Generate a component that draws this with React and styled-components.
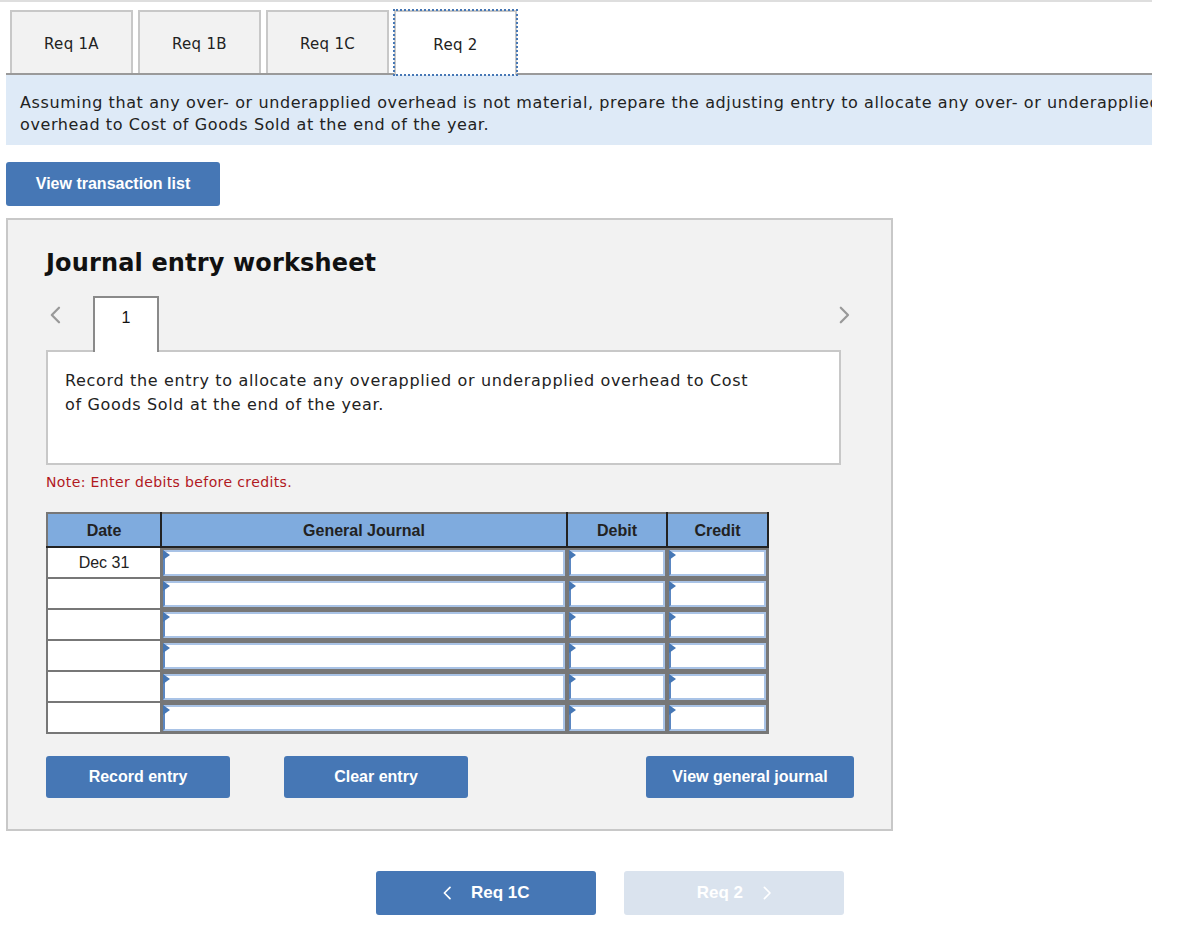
import React from 'react';
import styled, { createGlobalStyle } from 'styled-components';

const GlobalStyle = createGlobalStyle`
  body {
    margin: 0;
    background: #fff;
    font-family: 'DejaVu Sans', Verdana, sans-serif;
    color: #222;
  }
`;

const tabs = ['Req 1A', 'Req 1B', 'Req 1C', 'Req 2'];
const rows = ['Dec 31', '', '', '', '', ''];

const Chevron = ({ dir = 'left', color = '#999', size = 18, width = 2.5 }) => (
  <svg width={size * 0.6} height={size} viewBox='0 0 12 20' fill='none'>
    <path
      d={dir === 'left' ? 'M10 2 L2 10 L10 18' : 'M2 2 L10 10 L2 18'}
      stroke={color}
      strokeWidth={width}
      strokeLinecap='round'
      strokeLinejoin='round'
    />
  </svg>
);

const App = () => (
  <Page>
    <GlobalStyle />
    <TopRule />
    <TabBar>
      {tabs.map((t, i) => (
        <Tab key={t} active={i === tabs.length - 1}>
          {t}
        </Tab>
      ))}
    </TabBar>
    <Instruction>
      <span>
        Assuming that any over- or underapplied overhead is not material, prepare the adjusting entry to allocate any
        over- or underapplied
      </span>
      <span>overhead to Cost of Goods Sold at the end of the year.</span>
    </Instruction>
    <Toolbar>
      <BlueButton width={214} height={44}>
        View transaction list
      </BlueButton>
    </Toolbar>

    <Panel>
      <Heading>Journal entry worksheet</Heading>
      <EntryNav>
        <NavArrow>
          <Chevron dir='left' />
        </NavArrow>
        <EntryTab>1</EntryTab>
        <NavArrow right>
          <Chevron dir='right' />
        </NavArrow>
      </EntryNav>
      <Description>
        Record the entry to allocate any overapplied or underapplied overhead to Cost
        <br />
        of Goods Sold at the end of the year.
      </Description>
      <Note>Note: Enter debits before credits.</Note>

      <Journal>
        <colgroup>
          <col style={{ width: 114 }} />
          <col style={{ width: 406 }} />
          <col style={{ width: 100 }} />
          <col style={{ width: 101 }} />
        </colgroup>
        <thead>
          <tr>
            <Th>Date</Th>
            <Th>General Journal</Th>
            <Th>Debit</Th>
            <Th>Credit</Th>
          </tr>
        </thead>
        <tbody>
          {rows.map((d, i) => (
            <tr key={i}>
              <DateCell>{d}</DateCell>
              <InputCell>
                <Field />
              </InputCell>
              <InputCell>
                <Field />
              </InputCell>
              <InputCell>
                <Field />
              </InputCell>
            </tr>
          ))}
        </tbody>
      </Journal>

      <Actions>
        <BlueButton width={184} height={42}>
          Record entry
        </BlueButton>
        <BlueButton width={184} height={42}>
          Clear entry
        </BlueButton>
        <BlueButton width={208} height={42} push>
          View general journal
        </BlueButton>
      </Actions>
    </Panel>

    <Pager>
      <PageButton>
        <Chevron dir='left' color='#fff' size={14} width={2.4} />
        <span>Req 1C</span>
      </PageButton>
      <PageButton disabled>
        <span>Req 2</span>
        <Chevron dir='right' color='#fff' size={14} width={2.4} />
      </PageButton>
    </Pager>
  </Page>
);

export default App;

const Page = styled.div`
  width: 1152px;
  overflow: hidden;
  padding-bottom: 18px;
`;

const TopRule = styled.div`
  height: 2px;
  background: #dedede;
`;

const TabBar = styled.div`
  display: flex;
  gap: 5px;
  margin: 8px 0 0 6px;
  padding-left: 4px;
  border-bottom: 2px solid #9a9a9a;
`;

const Tab = styled.div`
  width: 123px;
  box-sizing: border-box;
  display: flex;
  align-items: center;
  justify-content: center;
  padding-top: 3px;
  font-size: 15px;
  letter-spacing: 0.3px;
  color: #222;
  background: ${(p) => (p.active ? '#fff' : '#f2f2f2')};
  border: 2px solid #c8c8c8;
  border-bottom: none;
  margin-bottom: ${(p) => (p.active ? '-2px' : '0')};
  height: ${(p) => (p.active ? '65px' : '63px')};
  outline: ${(p) => (p.active ? '2px dotted #4677b5' : 'none')};
  outline-offset: -1px;
`;

const Instruction = styled.div`
  margin-left: 6px;
  background: #deeaf7;
  padding: 17px 0 9px 14px;
  font-size: 16px;
  line-height: 22px;
  letter-spacing: 0.6px;
  color: #222;
  white-space: nowrap;
  overflow: hidden;

  span {
    display: block;
  }
`;

const Toolbar = styled.div`
  display: flex;
  padding: 17px 0 0 6px;
`;

const BlueButton = styled.button`
  width: ${(p) => p.width}px;
  height: ${(p) => p.height}px;
  margin-left: ${(p) => (p.push ? 'auto' : '0')};
  background: #4677b5;
  color: #fff;
  border: none;
  border-radius: 3px;
  font-family: 'Liberation Sans', Arial, sans-serif;
  font-weight: bold;
  font-size: 16px;
  padding: 0;
  cursor: pointer;
`;

const Panel = styled.div`
  margin: 12px 0 0 6px;
  width: 887px;
  box-sizing: border-box;
  background: #f2f2f2;
  border: 2px solid #c8c8c8;
  padding: 28px 38px 31px;
`;

const Heading = styled.h2`
  margin: 0 0 18px;
  font-family: 'DejaVu Sans', Verdana, sans-serif;
  font-size: 24px;
  line-height: 30px;
  letter-spacing: 0.15px;
  font-weight: bold;
  color: #111;
`;

const EntryNav = styled.div`
  display: flex;
  align-items: flex-start;
  width: 808px;
  height: 54px;
`;

const NavArrow = styled.div`
  width: 47px;
  height: 38px;
  display: flex;
  align-items: center;
  justify-content: ${(p) => (p.right ? 'flex-end' : 'flex-start')};
  margin-left: ${(p) => (p.right ? 'auto' : '0')};
  padding: ${(p) => (p.right ? '0 4px 0 0' : '0 0 0 4px')};
  box-sizing: border-box;
`;

const EntryTab = styled.div`
  width: 66px;
  height: 56px;
  box-sizing: border-box;
  background: #fff;
  border: 2px solid #8a8a8a;
  border-bottom: none;
  position: relative;
  z-index: 1;
  display: flex;
  justify-content: center;
  padding-top: 11px;
  font-family: 'Liberation Sans', Arial, sans-serif;
  font-size: 16px;
  color: #111;
`;

const Description = styled.div`
  width: 795px;
  height: 115px;
  box-sizing: border-box;
  background: #fff;
  border: 2px solid #c8c8c8;
  padding: 17px 17px 15px;
  font-size: 16px;
  line-height: 24px;
  letter-spacing: 0.66px;
  color: #222;
`;

const Note = styled.div`
  margin: 8px 0 21px;
  font-size: 14px;
  line-height: 18px;
  letter-spacing: 0.38px;
  color: #b1191e;
`;

const Journal = styled.table`
  width: 721px;
  border-collapse: collapse;
  table-layout: fixed;
  border: 2px solid #777;
  font-family: 'Liberation Sans', Arial, sans-serif;
`;

const Th = styled.th`
  height: 30px;
  padding: 2px 0 0;
  background: #7fabde;
  color: #222;
  font-size: 16px;
  font-weight: bold;
  border-left: 2px solid #222;
  border-bottom: 2px solid #222;

  &:first-child {
    border-left: none;
  }
  &:last-child {
    border-right: 2px solid #222;
  }
`;

const DateCell = styled.td`
  height: 27px;
  padding: 0;
  background: #fff;
  border: 2px solid #777;
  text-align: center;
  font-size: 16px;
  color: #222;
`;

const InputCell = styled.td`
  height: 27px;
  padding: 1px;
  background: #777;
  border: 2px solid #777;
  border-bottom-width: 1px;
`;

const Field = styled.div`
  position: relative;
  height: 26px;
  box-sizing: border-box;
  background: #fff;
  border: 2px solid #a9c3e6;
  border-left-color: #5b87c2;

  &::before {
    content: '';
    position: absolute;
    left: -2px;
    top: -2px;
    border-top: 5px solid transparent;
    border-bottom: 5px solid transparent;
    border-left: 7px solid #4677b5;
  }
`;

const Actions = styled.div`
  display: flex;
  gap: 54px;
  margin-top: 22px;
  width: 808px;
`;

const Pager = styled.div`
  display: flex;
  gap: 28px;
  margin: 40px 0 0 376px;
`;

const PageButton = styled.button`
  width: 220px;
  height: 44px;
  display: flex;
  align-items: center;
  justify-content: center;
  gap: 20px;
  border: none;
  border-radius: 3px;
  background: ${(p) => (p.disabled ? '#dae3ee' : '#4677b5')};
  color: #fff;
  font-family: 'Liberation Sans', Arial, sans-serif;
  font-weight: bold;
  font-size: 17px;
  padding: 0;
`;
